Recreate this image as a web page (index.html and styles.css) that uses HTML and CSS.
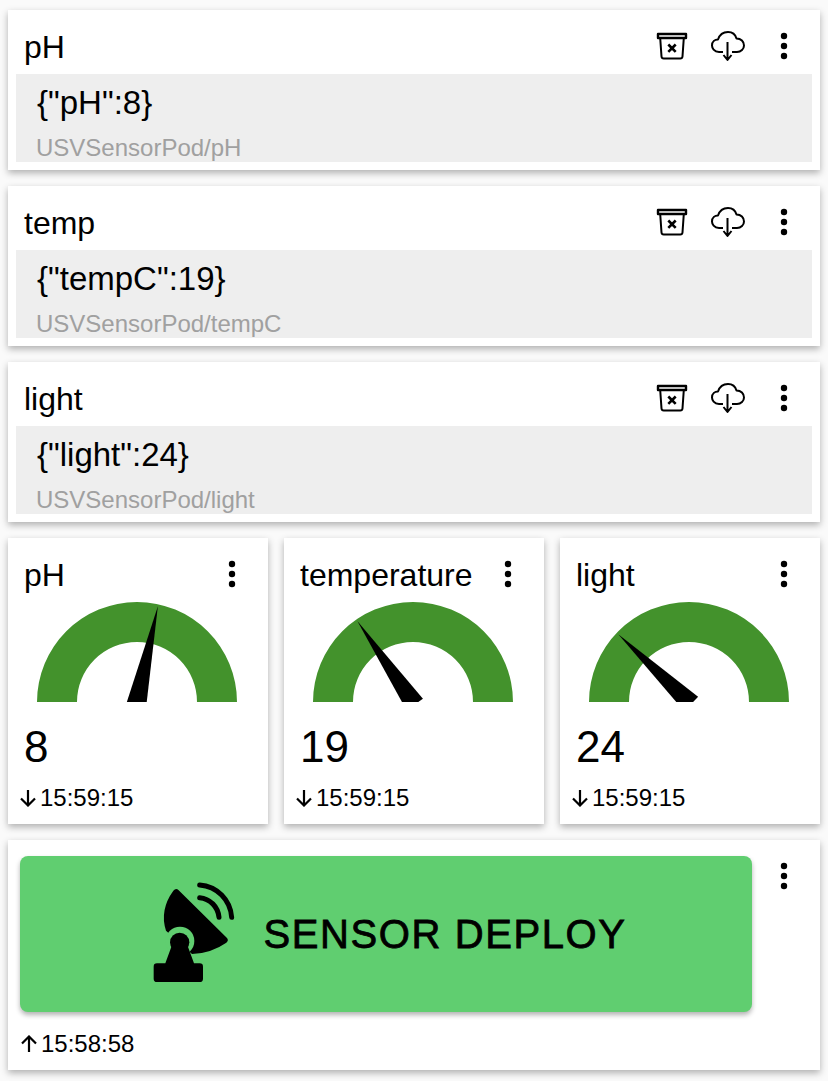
FILE: index.html
```html
<!DOCTYPE html>
<html>

<head>
	<title>USV sensor pod</title>
	<link rel="stylesheet" href="styles.css">
</head>

<body>
	<div class="top-edge"></div>

	<div class="card topic">
		<div class="topic-head">
			<span class="title">pH</span>
			<div class="actions">
				<svg class="icon" viewBox="0 0 36 36"><path class="lid" d="M4 6h28v4h-28z"/><path d="M6.200 10l1.300 18.500q.2 2 2.200 2h16.600q2 0 2.200-2l1.300-18.500"/><path class="cross" d="M14.300 16.500l7.400 7.400M21.700 16.500l-7.400 7.400"/></svg>
				<svg class="icon" viewBox="0 0 36 36"><path d="M13 24H9C4 24 2 20 2 17.500 2 13.500 5 11.500 8 11.500 9.500 7 13 4 18 4 22.500 4 25.500 7 26.500 10.500 31 10.500 34 13.500 34 17.500 34 21 31 24 27 24H22M17.500 14v18M13.500 27l4 5 4-5"/></svg>
				<svg class="dots" viewBox="0 0 10 30"><circle cx="5" cy="5" r="3.200"/><circle cx="5" cy="15" r="3.200"/><circle cx="5" cy="25" r="3.200"/></svg>
			</div>
		</div>
		<div class="topic-body">
			<div class="payload">{"pH":8}</div>
			<div class="path">USVSensorPod/pH</div>
		</div>
	</div>

	<div class="card topic">
		<div class="topic-head">
			<span class="title">temp</span>
			<div class="actions">
				<svg class="icon" viewBox="0 0 36 36"><path class="lid" d="M4 6h28v4h-28z"/><path d="M6.200 10l1.300 18.500q.2 2 2.200 2h16.600q2 0 2.200-2l1.300-18.500"/><path class="cross" d="M14.300 16.500l7.400 7.400M21.700 16.500l-7.400 7.400"/></svg>
				<svg class="icon" viewBox="0 0 36 36"><path d="M13 24H9C4 24 2 20 2 17.500 2 13.500 5 11.500 8 11.500 9.500 7 13 4 18 4 22.500 4 25.500 7 26.500 10.500 31 10.500 34 13.500 34 17.500 34 21 31 24 27 24H22M17.500 14v18M13.500 27l4 5 4-5"/></svg>
				<svg class="dots" viewBox="0 0 10 30"><circle cx="5" cy="5" r="3.200"/><circle cx="5" cy="15" r="3.200"/><circle cx="5" cy="25" r="3.200"/></svg>
			</div>
		</div>
		<div class="topic-body">
			<div class="payload">{"tempC":19}</div>
			<div class="path">USVSensorPod/tempC</div>
		</div>
	</div>

	<div class="card topic">
		<div class="topic-head">
			<span class="title">light</span>
			<div class="actions">
				<svg class="icon" viewBox="0 0 36 36"><path class="lid" d="M4 6h28v4h-28z"/><path d="M6.200 10l1.300 18.500q.2 2 2.200 2h16.600q2 0 2.200-2l1.300-18.500"/><path class="cross" d="M14.300 16.500l7.400 7.400M21.700 16.500l-7.400 7.400"/></svg>
				<svg class="icon" viewBox="0 0 36 36"><path d="M13 24H9C4 24 2 20 2 17.500 2 13.500 5 11.500 8 11.500 9.500 7 13 4 18 4 22.500 4 25.500 7 26.500 10.500 31 10.500 34 13.500 34 17.500 34 21 31 24 27 24H22M17.500 14v18M13.500 27l4 5 4-5"/></svg>
				<svg class="dots" viewBox="0 0 10 30"><circle cx="5" cy="5" r="3.200"/><circle cx="5" cy="15" r="3.200"/><circle cx="5" cy="25" r="3.200"/></svg>
			</div>
		</div>
		<div class="topic-body">
			<div class="payload">{"light":24}</div>
			<div class="path">USVSensorPod/light</div>
		</div>
	</div>

	<div class="gauges">
		<div class="card gauge-card">
			<div class="gauge-head">
				<span class="title">pH</span>
				<svg class="dots" viewBox="0 0 10 30"><circle cx="5" cy="5" r="3.200"/><circle cx="5" cy="15" r="3.200"/><circle cx="5" cy="25" r="3.200"/></svg>
			</div>
			<svg class="gauge" viewBox="0 0 200 100">
				<path class="arc" d="M0 100a100 100 0 0 1 200 0h-40a60 60 0 0 0-120 0z"/>
				<polygon points="90,103 100,2 110,103" transform="rotate(12.3 100 100)"/>
			</svg>
			<div class="value">8</div>
			<div class="time">
				<svg class="arrow" viewBox="0 0 18 18"><path d="M9 1v15M2 9.500l7 7 7-7"/></svg>
				<span>15:59:15</span>
			</div>
		</div>

		<div class="card gauge-card">
			<div class="gauge-head">
				<span class="title">temperature</span>
				<svg class="dots" viewBox="0 0 10 30"><circle cx="5" cy="5" r="3.200"/><circle cx="5" cy="15" r="3.200"/><circle cx="5" cy="25" r="3.200"/></svg>
			</div>
			<svg class="gauge" viewBox="0 0 200 100">
				<path class="arc" d="M0 100a100 100 0 0 1 200 0h-40a60 60 0 0 0-120 0z"/>
				<polygon points="90,103 100,2 110,103" transform="rotate(-34.500 100 100)"/>
			</svg>
			<div class="value">19</div>
			<div class="time">
				<svg class="arrow" viewBox="0 0 18 18"><path d="M9 1v15M2 9.500l7 7 7-7"/></svg>
				<span>15:59:15</span>
			</div>
		</div>

		<div class="card gauge-card">
			<div class="gauge-head">
				<span class="title">light</span>
				<svg class="dots" viewBox="0 0 10 30"><circle cx="5" cy="5" r="3.200"/><circle cx="5" cy="15" r="3.200"/><circle cx="5" cy="25" r="3.200"/></svg>
			</div>
			<svg class="gauge" viewBox="0 0 200 100">
				<path class="arc" d="M0 100a100 100 0 0 1 200 0h-40a60 60 0 0 0-120 0z"/>
				<polygon points="90,103 100,2 110,103" transform="rotate(-46.200 100 100)"/>
			</svg>
			<div class="value">24</div>
			<div class="time">
				<svg class="arrow" viewBox="0 0 18 18"><path d="M9 1v15M2 9.500l7 7 7-7"/></svg>
				<span>15:59:15</span>
			</div>
		</div>
	</div>

	<div class="card deploy-card">
		<div class="deploy-row">
			<button class="deploy">
				<svg class="dish" viewBox="0 0 420 420">
					<path d="M157 92q8-9 16-1L318 234q6 8-2 14Q270 280 213 282L135 212Q115 150 157 92z"/>
					<circle class="ring" cx="177" cy="243" r="43"/>
					<circle cx="176" cy="247" r="29"/>
					<path d="M152 258L133 310H108q-10 0-10 10v36q0 10 10 10h128q10 0 10-10v-36q0-10-10-10H219L200 258z"/>
					<path class="wave" d="M236 75c52 4 92 44 96 97M236 113c31 3 55 27 58 59"/>
				</svg>
				<span>SENSOR DEPLOY</span>
			</button>
			<svg class="dots" viewBox="0 0 10 30"><circle cx="5" cy="5" r="3.200"/><circle cx="5" cy="15" r="3.200"/><circle cx="5" cy="25" r="3.200"/></svg>
		</div>
		<div class="time">
			<svg class="arrow" viewBox="0 0 18 18"><path d="M9 17V2M2 8.500l7-7 7 7"/></svg>
			<span>15:58:58</span>
		</div>
	</div>
</body>

</html>
```

FILE: styles.css
```css
body {
	margin: 0;
	padding: 10px 8px 0;
	height: 1071px;
	overflow: hidden;
	background-color: #fafafa;
	color: black;
	font-family: "Liberation Sans", Arial, sans-serif;
}

.top-edge {
	height: 0;
	margin-top: -10px;
	margin-bottom: 10px;
	box-shadow: 0 3px 7px rgba(0, 0, 0, 0.3);
}

.card {
	background-color: white;
	box-shadow: 0 3px 7px rgba(0, 0, 0, 0.3);
	margin-bottom: 16px;
}

.title {
	font-size: 32px;
	line-height: 36px;
	padding-top: 2px;
}

.dots {
	display: block;
	flex: none;
	width: 10px;
	height: 30px;
	fill: black;
}

/* topic cards */
.topic {
	height: 160px;
	padding: 0 8px;
	box-sizing: border-box;
}

.topic-head {
	height: 64px;
	box-sizing: border-box;
	padding: 8px 8px 0;
	display: flex;
	align-items: center;
	justify-content: space-between;
}

.actions {
	display: flex;
	align-items: center;
	gap: 20px;
	margin-right: 15px;
}

.actions .dots {
	margin-left: 13px;
}

.icon {
	width: 36px;
	height: 36px;
	fill: none;
	stroke: black;
	stroke-width: 2;
	stroke-linejoin: round;
}

.icon .lid {
	stroke-width: 2.400;
}

.icon .cross {
	stroke-width: 2.600;
}

.topic-body {
	height: 88px;
	padding: 0 21px;
	background-color: #eeeeee;
}

.payload {
	font-size: 33px;
	line-height: 36px;
	padding-top: 11px;
}

.path {
	font-size: 24px;
	line-height: 28px;
	margin-top: 13px;
	margin-left: -1px;
	color: #a0a0a0;
}

/* gauges */
.gauges {
	display: grid;
	grid-template-columns: repeat(3, 260px);
	gap: 16px;
}

.gauge-card {
	height: 286px;
	margin-bottom: 0;
	box-sizing: border-box;
	padding: 0 16px;
}

.gauge-head {
	height: 64px;
	box-sizing: border-box;
	padding: 8px 15px 0 0;
	display: flex;
	align-items: center;
	justify-content: space-between;
}

.gauge {
	display: block;
	width: 200px;
	height: 100px;
	margin-left: 13px;
}

.arc {
	fill: #43922c;
}

.value {
	font-size: 44px;
	line-height: 50px;
	margin-top: 20px;
}

.time {
	display: flex;
	align-items: center;
	gap: 3px;
	margin-left: -5px;
	margin-top: 12px;
	font-size: 24px;
	line-height: 28px;
}

.arrow {
	width: 18px;
	height: 18px;
	fill: none;
	stroke: black;
	stroke-width: 2.200;
}

/* deploy button */
.deploy-card {
	height: 230px;
	margin: 16px 0 0;
	padding: 16px 12px 0;
	box-sizing: border-box;
}

.deploy-row {
	display: flex;
	justify-content: space-between;
	padding-right: 19px;
}

.deploy {
	width: 732px;
	height: 156px;
	border: none;
	border-radius: 8px;
	background-color: #60ce70;
	box-shadow: 0 3px 5px rgba(0, 0, 0, 0.3);
	display: flex;
	align-items: center;
	justify-content: center;
	padding: 0 24px 0 0;
	gap: 2px;
	color: black;
	font-family: "Liberation Sans", Arial, sans-serif;
	font-size: 40px;
	letter-spacing: 1.600px;
	-webkit-text-stroke: 0.8px black;
}

.deploy-row .dots {
	margin-top: 5px;
}

.dish {
	width: 140px;
	height: 140px;
	flex: none;
	fill: black;
	margin: 0 0 8px 0;
}

.ring {
	fill: #60ce70;
}

.wave {
	fill: none;
	stroke: black;
	stroke-width: 15;
	stroke-linecap: round;
}

.deploy-card .time {
	margin-left: 0;
	margin-top: 18px;
}
```
